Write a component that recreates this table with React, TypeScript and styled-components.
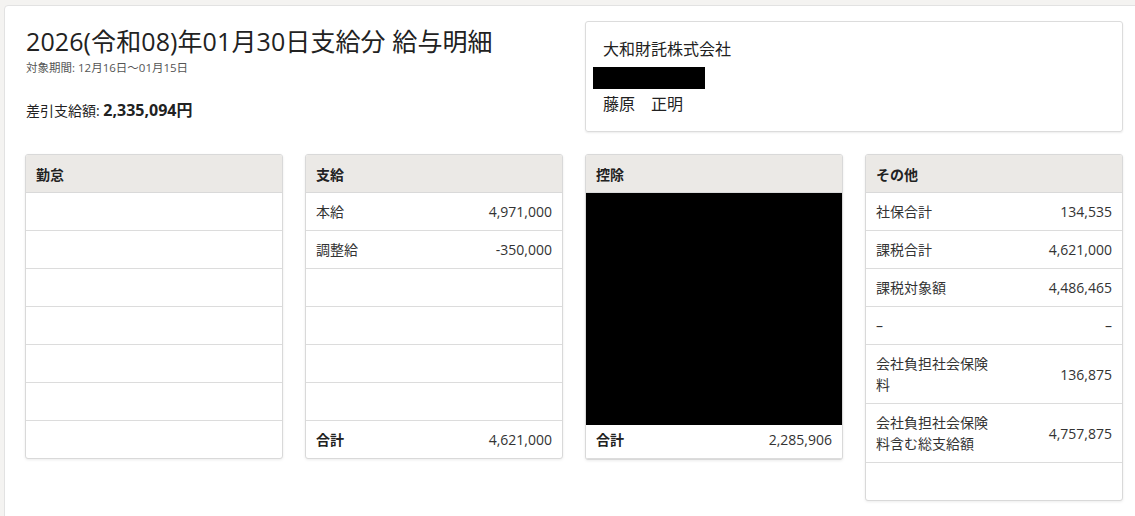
import React from "react";
import styled, { createGlobalStyle } from "styled-components";

const Global = createGlobalStyle`
  html, body { margin: 0; padding: 0; overflow: hidden; }
  body {
    background: #f4f3f1;
    font-family: "Open Sans", "Noto Sans CJK JP", sans-serif;
    color: #333;
  }
  * { box-sizing: border-box; }
`;

const Page = styled.div`
  padding: 5px 0 0 4px;
  width: 1160px;
  height: 516px;
  overflow: hidden;
`;

const Panel = styled.div`
  background: #fff;
  border: 1px solid #e2e2e2;
  border-radius: 4px;
  min-height: 560px;
  padding: 15px 0 0 20px;
`;

const Content = styled.div`
  width: 1098px;
  display: flex;
  flex-direction: column;
  gap: 22px;
`;

const TopGrid = styled.div`
  display: grid;
  grid-template-columns: 1fr 1fr;
  gap: 22px;
`;

const TitleBlock = styled.div`
  display: flex;
  flex-direction: column;
  padding-top: 5px;
`;

const Title = styled.h1`
  margin: 0 0 0 1px;
  font-size: 25px;
  font-weight: 400;
  line-height: 30px;
  color: #222;
  letter-spacing: 0.1px;
`;

const Period = styled.div`
  font-size: 11.5px;
  line-height: 15px;
  color: #555;
  margin-top: 4px;
  margin-left: 1px;
`;

const NetPay = styled.div`
  margin-top: 25px;
  margin-left: 1px;
  font-size: 14px;
  line-height: 20px;
  color: #222;
  b {
    font-size: 16px;
    font-weight: 700;
  }
`;

const CompanyCard = styled.div`
  border: 1px solid #dcdcdc;
  border-radius: 3px;
  box-shadow: 0 1px 2px rgba(0, 0, 0, 0.08);
  padding: 15px 8px 15px 7px;
  height: 111px;
  font-size: 16px;
  line-height: 24px;
  color: #222;
`;

const CompanyLine = styled.div`
  padding-left: 10px;
`;

const RedactBar = styled.div`
  width: 112px;
  height: 22px;
  background: #000;
  margin: 6px 0 3px;
`;

const CardsGrid = styled.div`
  display: grid;
  grid-template-columns: repeat(4, 1fr);
  gap: 22px;
  align-items: start;
`;

const Card = styled.div`
  border: 1px solid #d9d9d9;
  border-radius: 3px;
  box-shadow: 0 1px 3px rgba(0, 0, 0, 0.08);
  overflow: hidden;
  background: #fff;
`;

const CardHeader = styled.div`
  background: #ebe9e6;
  height: 38px;
  border-bottom: 1px solid #d9d9d9;
  display: flex;
  align-items: center;
  padding: 0 10px;
  font-size: 14px;
  font-weight: 700;
  color: #222;
`;

const CardBody = styled.div`
  position: relative;
`;

const Row = styled.div<{ $total?: boolean }>`
  display: flex;
  align-items: center;
  justify-content: space-between;
  padding: 8px 10px;
  min-height: 38px;
  line-height: 21px;
  font-size: 14px;
  color: #333;
  border-bottom: 1px solid #dcdcdc;
  &:last-child {
    border-bottom: none;
    min-height: 37px;
  }
  ${(p) => (p.$total ? "& > span:first-child { font-weight: 700; color: #222; }" : "")}
`;

const Label = styled.span`
  width: 50%;
`;

const Value = styled.span`
  text-align: right;
`;

const Redaction = styled.div`
  position: absolute;
  left: 0;
  right: -1px;
  top: 0;
  height: 232px;
  background: #000;
`;

type Item = [string, string];

const Table = ({
  title,
  rows,
  total,
  redact,
}: {
  title: string;
  rows: (Item | null)[];
  total?: string;
  redact?: boolean;
}) => (
  <Card>
    <CardHeader>{title}</CardHeader>
    <CardBody>
      {rows.map((r, i) => (
        <Row key={i}>
          <Label>{r ? r[0] : ""}</Label>
          <Value>{r ? r[1] : ""}</Value>
        </Row>
      ))}
      {total !== undefined && (
        <Row $total>
          <Label>合計</Label>
          <Value>{total}</Value>
        </Row>
      )}
      {redact && <Redaction />}
    </CardBody>
  </Card>
);

export default function App() {
  return (
    <>
      <Global />
      <Page>
        <Panel>
          <Content>
            <TopGrid>
              <TitleBlock>
                <Title>2026(令和08)年01月30日支給分 給与明細</Title>
                <Period>対象期間: 12月16日〜01月15日</Period>
                <NetPay>
                  差引支給額: <b>2,335,094円</b>
                </NetPay>
              </TitleBlock>
              <CompanyCard>
                <CompanyLine>大和財託株式会社</CompanyLine>
                <RedactBar />
                <CompanyLine>藤原　正明</CompanyLine>
              </CompanyCard>
            </TopGrid>
            <CardsGrid>
              <Table title="勤怠" rows={[null, null, null, null, null, null, null]} />
              <Table
                title="支給"
                rows={[["本給", "4,971,000"], ["調整給", "-350,000"], null, null, null, null]}
                total="4,621,000"
              />
              <Table
                title="控除"
                rows={[null, null, null, null, null, null]}
                total="2,285,906"
                redact
              />
              <Table
                title="その他"
                rows={[
                  ["社保合計", "134,535"],
                  ["課税合計", "4,621,000"],
                  ["課税対象額", "4,486,465"],
                  ["–", "–"],
                  ["会社負担社会保険料", "136,875"],
                  ["会社負担社会保険料含む総支給額", "4,757,875"],
                  null,
                ]}
              />
            </CardsGrid>
          </Content>
        </Panel>
      </Page>
    </>
  );
}
